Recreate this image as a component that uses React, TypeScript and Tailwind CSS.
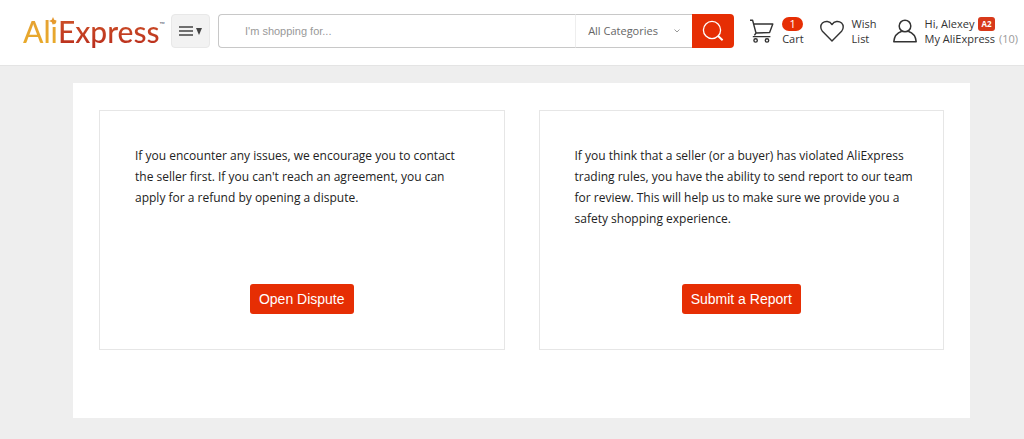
import React from 'react';

interface HeaderLinkProps {
  icon: React.ReactNode;
  children: React.ReactNode;
}

interface ActionCardProps {
  text: string;
  action: string;
}

const cards: ActionCardProps[] = [
  {
    text: "If you encounter any issues, we encourage you to contact the seller first. If you can't reach an agreement, you can apply for a refund by opening a dispute.",
    action: 'Open Dispute',
  },
  {
    text: 'If you think that a seller (or a buyer) has violated AliExpress trading rules, you have the ability to send report to our team for review. This will help us to make sure we provide you a safety shopping experience.',
    action: 'Submit a Report',
  },
];

const CartIcon = () => (
  <svg viewBox="0 0 24 24" className="h-6 w-6 shrink-0" fill="none" stroke="currentColor" strokeWidth="1.4" strokeLinejoin="round">
    <path d="M0 1.2h2.6L6 14M3.6 5h19.2l-3.2 8.6L6 14l-1.6 2.4M2.8 17.6h17.6" />
    <circle cx="5.6" cy="21.4" r="1.7" />
    <circle cx="17" cy="21.4" r="1.7" />
  </svg>
);

const HeartIcon = () => (
  <svg viewBox="0 0 24 24" className="h-6 w-6 shrink-0" fill="none" stroke="currentColor" strokeWidth="1.4" strokeLinejoin="round">
    <path d="M12 22 2.4 12.2C.2 9.8.3 6.2 2.4 4.1 5.2 1.5 9.7 1.9 12 5.6c2.3-3.7 6.8-4.1 9.6-1.5 2.1 2.1 2.2 5.7 0 8.1L12 22Z" />
  </svg>
);

const UserIcon = () => (
  <svg viewBox="0 0 24 24" className="h-6 w-6 shrink-0" fill="none" stroke="currentColor" strokeWidth="1.5" strokeLinejoin="round">
    <circle cx="12" cy="7" r="5.8" />
    <path d="M8.8 12.3C4.2 13.8 1.2 17.6.8 22.8h22.4c-.4-5.2-3.4-9-8-10.5" />
  </svg>
);

const SearchIcon = () => (
  <svg viewBox="0 0 22 22" className="h-[22px] w-[22px]" fill="none" stroke="currentColor">
    <circle cx="10" cy="10" r="8.6" strokeWidth="1.3" />
    <path d="m15.8 15.8 4.8 4.4" strokeWidth="2" />
  </svg>
);

const Logo = () => (
  <a href="#" className="relative flex shrink-0 items-start font-['Lato',sans-serif] text-[30px] font-medium leading-[34px]">
    <span className="bg-linear-to-b from-[#e5a035] to-[#e9ab28] bg-clip-text text-transparent">Ali</span>
    <span className="bg-linear-to-b from-[#d0562a] to-[#b92b1c] bg-clip-text text-transparent">Express</span>
    <span className="text-[7px] leading-5 text-gray-500">™</span>
    <svg viewBox="0 0 8 8" className="absolute left-[26px] top-[3px] h-2 w-2" fill="#e5982f">
      <path d="M4 0 5.2 2.8 8 4 5.2 5.2 4 8 2.8 5.2 0 4 2.8 2.8Z" />
    </svg>
  </a>
);

const HeaderLink: React.FC<HeaderLinkProps> = ({ icon, children }) => (
  <a href="#" className="flex shrink-0 items-center gap-2 text-[11px] leading-[15px] text-[#333]">
    {icon}
    <span className="flex flex-col items-start whitespace-nowrap">{children}</span>
  </a>
);

const SearchBar = () => (
  <form className="ml-2 flex h-[34px] min-w-0 flex-1" onSubmit={(e) => e.preventDefault()}>
    <input
      type="text"
      aria-label="Search"
      placeholder="I'm shopping for..."
      className="min-w-0 flex-1 rounded-l-sm border border-r-0 border-[#c8c8c8] pl-[26px] font-['Liberation_Sans',sans-serif] text-[11px] outline-none placeholder:text-[#999]"
    />
    <div className="relative w-[117px] border-y border-l border-y-[#c8c8c8] border-l-[#eee]">
      <select
        aria-label="Category"
        className="h-full w-full appearance-none bg-transparent pl-3 text-[11px] text-[#666] outline-none"
      >
        <option>All Categories</option>
      </select>
      <svg viewBox="0 0 6 4" className="pointer-events-none absolute right-3 top-3.5 h-1 w-1.5" fill="none" stroke="#999">
        <path d="m.5.5 2.5 2.5L5.5.5" />
      </svg>
    </div>
    <button type="submit" aria-label="Search" className="flex w-[42px] items-center justify-center rounded-r-sm bg-[#e62e04] text-white">
      <SearchIcon />
    </button>
  </form>
);

const Header = () => (
  <header className="flex h-[66px] items-start border-b border-[#e4e4e4] bg-white pl-[23px] pr-1.5 pt-3.5">
    <div className="w-[148px] shrink-0">
      <Logo />
    </div>
    <button type="button" aria-label="Menu" className="flex h-[34px] w-[39px] shrink-0 items-center justify-center gap-[3px] rounded-sm border border-[#e8e8e8] bg-[#f2f2f2] text-[#444]">
      <svg viewBox="0 0 14 10" className="h-2.5 w-3.5" stroke="currentColor" strokeWidth="1.3">
        <path d="M0 1h14M0 5h14M0 9h14" />
      </svg>
      <svg viewBox="0 0 6 7" className="h-[7px] w-1.5" fill="currentColor">
        <path d="M0 0h6L3 7Z" />
      </svg>
    </button>
    <SearchBar />
    <nav className="ml-4 flex h-[34px] shrink-0 items-center gap-4">
      <HeaderLink icon={<CartIcon />}>
        <span className="w-[21px] rounded-full bg-[#e62e04] text-center leading-[14px] text-white">1</span>
        <span>Cart</span>
      </HeaderLink>
      <HeaderLink icon={<HeartIcon />}>
        <span>Wish</span>
        <span>List</span>
      </HeaderLink>
      <HeaderLink icon={<UserIcon />}>
        <span className="flex items-center gap-1">
          Hi, Alexey
          <b className="rounded-[3px] bg-[#d8391a] px-[3px] text-[8px] leading-[14px] text-white">A2</b>
        </span>
        <span>
          My AliExpress <span className="ml-px text-[#999]">(10)</span>
        </span>
      </HeaderLink>
    </nav>
  </header>
);

const ActionCard: React.FC<ActionCardProps> = ({ text, action }) => (
  <section className="flex min-h-60 flex-col items-center justify-between border border-[#e6e6e6] pb-[35px] pt-[34px]">
    <p className="w-full pl-[35px] pr-[29px] text-xs leading-[21px] text-[#222]">{text}</p>
    <button
      type="button"
      className="h-[30px] rounded-[3px] bg-[#e62e04] px-[9px] font-['Liberation_Sans',sans-serif] text-sm text-white hover:bg-[#cf2a04]"
    >
      {action}
    </button>
  </section>
);

export default function App() {
  return (
    <div className="min-h-screen bg-[#eee] pb-5 font-['Open_Sans',sans-serif]">
      <Header />
      <main className="ml-[73px] mr-[54px] mt-[17px] grid grid-cols-2 gap-[34px] bg-white px-[26px] pb-[68px] pt-[27px]">
        {cards.map((card) => (
          <ActionCard key={card.action} {...card} />
        ))}
      </main>
    </div>
  );
}
